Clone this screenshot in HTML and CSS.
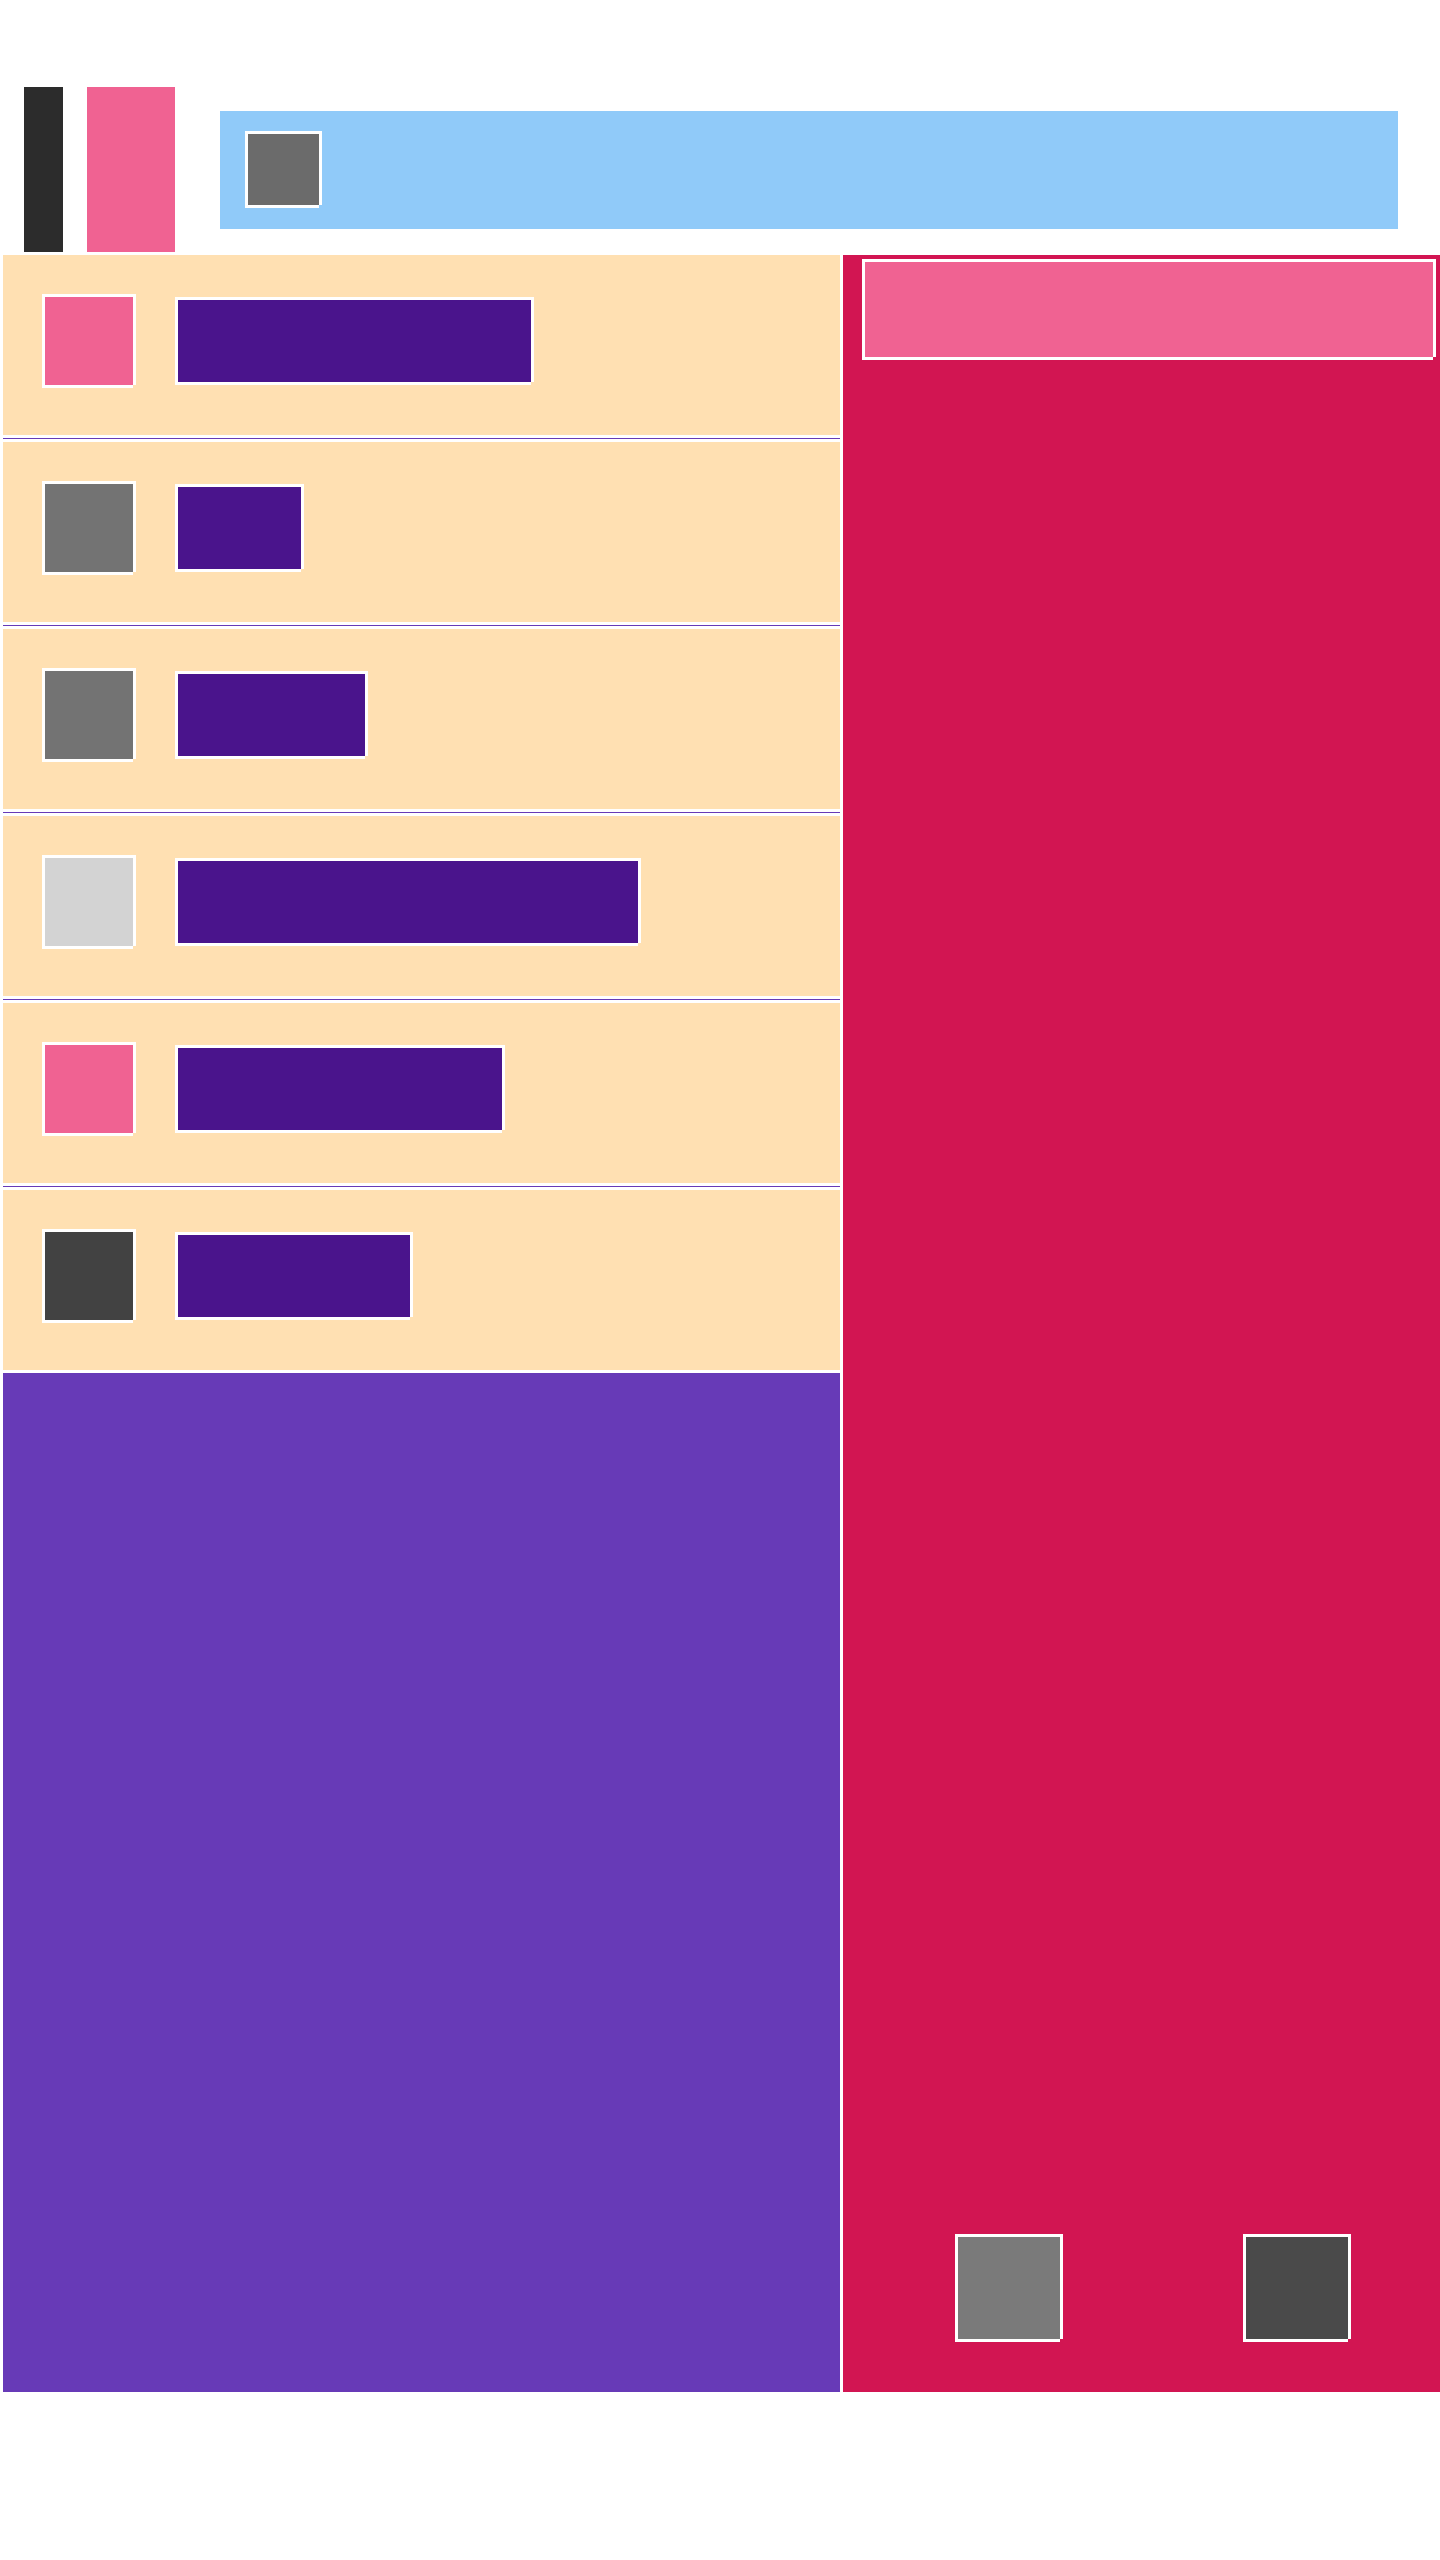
FILE: index.html
```html
<!DOCTYPE html>
<html lang="en">

<head>
    <meta charset="UTF-8">
    <meta name="viewport" content="width=device-width, initial-scale=1.0">
    <title>Layout</title>
    <link rel="stylesheet" href="styles.css">
</head>

<body>
    <div class="page">
        <div class="topbar">
            <div class="bar-dark"></div>
            <div class="bar-pink"></div>
            <div class="header">
                <div class="tile header-icon"></div>
            </div>
        </div>

        <div class="main">
            <div class="left">
                <div class="row">
                    <div class="tile thumb pink"></div>
                    <div class="tile label" style="width: 359px;"></div>
                </div>
                <div class="divider"></div>
                <div class="row">
                    <div class="tile thumb grey"></div>
                    <div class="tile label" style="width: 129px;"></div>
                </div>
                <div class="divider"></div>
                <div class="row">
                    <div class="tile thumb grey"></div>
                    <div class="tile label" style="width: 193px;"></div>
                </div>
                <div class="divider"></div>
                <div class="row">
                    <div class="tile thumb light"></div>
                    <div class="tile label" style="width: 466px;"></div>
                </div>
                <div class="divider"></div>
                <div class="row">
                    <div class="tile thumb pink"></div>
                    <div class="tile label" style="width: 330px;"></div>
                </div>
                <div class="divider"></div>
                <div class="row">
                    <div class="tile thumb dark"></div>
                    <div class="tile label" style="width: 238px;"></div>
                </div>
                <div class="purple-area"></div>
            </div>

            <div class="right">
                <div class="tile banner"></div>
                <div class="actions">
                    <div class="tile action mid"></div>
                    <div class="tile action deep"></div>
                </div>
            </div>
        </div>
    </div>
</body>

</html>
```

FILE: styles.css
```css
* {
    box-sizing: border-box;
}

body {
    margin: 0;
    font-family: "Liberation Sans", Arial, sans-serif;
    background: #fff;
}

.page {
    padding-top: 87px;
    min-height: 2560px;
}

/* top strip */
.topbar {
    display: flex;
    align-items: center;
    height: 165px;
    padding: 0 42px 0 24px;
}

.bar-dark {
    width: 39px;
    height: 165px;
    background: #2c2c2c;
}

.bar-pink {
    width: 88px;
    height: 165px;
    margin-left: 24px;
    background: #f06292;
}

.header {
    flex: 1;
    height: 118px;
    margin-left: 45px;
    padding-left: 25px;
    display: flex;
    align-items: center;
    background: #90caf9;
}

/* white framed boxes, bottom-right corner left open */
.tile {
    border: 3px solid #fff;
    clip-path: polygon(0 0, 100% 0, 100% calc(100% - 3px), calc(100% - 3px) calc(100% - 3px), calc(100% - 3px) 100%, 0 100%);
}

.header-icon {
    width: 77px;
    height: 77px;
    background: #6b6b6b;
}

/* main */
.main {
    display: flex;
    gap: 3px;
    margin-top: 3px;
    padding-left: 3px;
}

.left {
    width: 837px;
    display: flex;
    flex-direction: column;
}

.row {
    height: 180px;
    display: flex;
    align-items: center;
    gap: 39px;
    padding: 39px 0 47px 39px;
    background: #ffe0b2;
}

.divider {
    height: 1px;
    margin: 3px 0;
    background: #673ab7;
}

.thumb {
    width: 94px;
    height: 94px;
}

.pink {
    background: #f06292;
}

.grey {
    background: #737373;
}

.light {
    background: #d3d3d3;
}

.dark {
    background: #424242;
}

.label {
    height: 88px;
    background: #4a148c;
}

.purple-area {
    height: 1019px;
    margin-top: 3px;
    background: #673ab7;
}

.right {
    flex: 1;
    display: flex;
    flex-direction: column;
    padding: 4px 4px 50px 19px;
    background: #d21552;
}

.banner {
    width: 574px;
    height: 101px;
    background: #f06292;
}

.actions {
    display: flex;
    gap: 180px;
    margin-top: auto;
    padding-left: 93px;
}

.action {
    width: 108px;
    height: 108px;
}

.mid {
    background: #7a7a7a;
}

.deep {
    background: #4a4a4a;
}
```
